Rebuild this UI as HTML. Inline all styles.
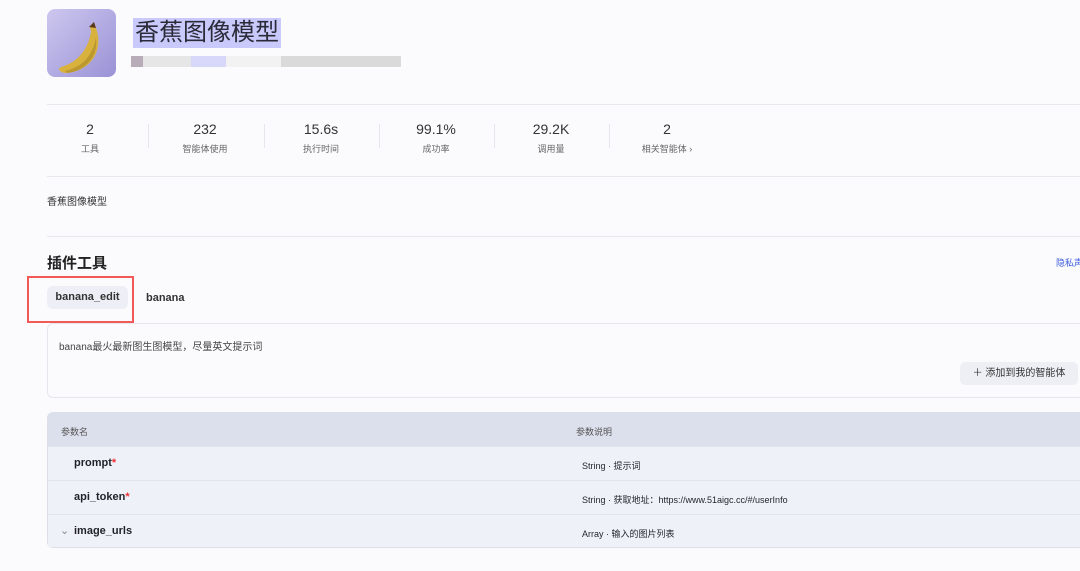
<!DOCTYPE html><html><head><meta charset="utf-8"><style>
*{margin:0;padding:0;box-sizing:border-box}
body{width:1080px;height:571px;background:#fbfbfe;font-family:"Liberation Sans","Noto Sans CJK SC",sans-serif;color:#1f2329;position:relative;overflow:hidden}
.a{position:absolute;white-space:nowrap}
.hr{position:absolute;left:47px;right:0;height:1px;background:#e8e9ef}
.st{position:absolute;top:121px;text-align:center;width:116px}
.st b{display:block;font-weight:normal;font-size:14px;color:#333}
.st span{display:block;font-size:9px;color:#666;margin-top:5px}
.dv{position:absolute;top:124px;width:1px;height:24px;background:#e6e7ec}
.row{position:absolute;left:48px;right:0;height:33px;background:#eff1f8;border-top:1px solid #e2e4ec;font-size:11px}
</style></head><body>
<div class="a" style="left:47px;top:9px;width:69px;height:68px;border-radius:8px;background:linear-gradient(135deg,#cdc7ef,#9a92d6)">
<svg width="69" height="68" viewBox="0 0 69 68"><path d="M14 58 C30 54 42 40 44 22 L43 18 L48 17 L50 22 C56 44 42 62 20 64 C13 64 10 60 14 58Z" fill="#d9b23e"/><path d="M18 62 C36 58 46 46 49 28 C52 48 38 62 20 64Z" fill="#a8872a" opacity=".6"/><path d="M42 18 L47 13 L49 19Z" fill="#5a3a1a"/></svg></div>
<div class="a" style="left:133px;top:18px;height:30px;padding:0 2px;background:#c9c9fb;font-size:24px;line-height:30px;color:#2a2a38">香蕉图像模型</div>
<div class="a" style="left:131px;top:56px;width:270px;height:11px;background:linear-gradient(90deg,#9a8a9a 0 12px,#ddd 12px 60px,#c8c8f8 60px 95px,#eee 95px 150px,#ccc 150px 270px);opacity:.7"></div>
<div class="hr" style="top:104px"></div>
<div class="st" style="left:32px"><b>2</b><span>工具</span></div>
<div class="dv" style="left:148px"></div>
<div class="st" style="left:147px"><b>232</b><span>智能体使用</span></div>
<div class="dv" style="left:264px"></div>
<div class="st" style="left:263px"><b>15.6s</b><span>执行时间</span></div>
<div class="dv" style="left:379px"></div>
<div class="st" style="left:378px"><b>99.1%</b><span>成功率</span></div>
<div class="dv" style="left:494px"></div>
<div class="st" style="left:493px"><b>29.2K</b><span>调用量</span></div>
<div class="dv" style="left:609px"></div>
<div class="st" style="left:609px"><b>2</b><span>相关智能体 ›</span></div>
<div class="hr" style="top:176px"></div>
<div class="a" style="left:47px;top:193px;font-size:10px;color:#333">香蕉图像模型</div>
<div class="hr" style="top:236px"></div>
<div class="a" style="left:47px;top:252px;font-size:15px;font-weight:bold;color:#222">插件工具</div>
<div class="a" style="left:1056px;top:256px;font-size:9px;color:#3b5bdb">隐私声明</div>
<div class="a" style="left:47px;top:286px;width:81px;height:23px;border-radius:6px;background:#eeeff6;font-size:11px;font-weight:bold;line-height:23px;text-align:center;color:#333">banana_edit</div>
<div class="a" style="left:146px;top:292px;font-size:11px;font-weight:bold;color:#333">banana</div>
<div class="a" style="left:27px;top:276px;width:107px;height:47px;border:2px solid #f25a5a"></div>
<div class="a" style="left:47px;top:323px;width:1040px;height:75px;border:1px solid #e6e7ee;border-radius:6px;background:#fbfbfe"></div>
<div class="a" style="left:59px;top:338px;font-size:10px;color:#444">banana最火最新图生图模型，尽量英文提示词</div>
<div class="a" style="left:960px;top:362px;width:118px;height:23px;border-radius:5px;background:#eeeff5;font-size:10px;line-height:23px;text-align:center;color:#333">＋ 添加到我的智能体</div>
<div class="a" style="left:47px;top:412px;width:1040px;height:136px;border:1px solid #dcdfea;border-radius:6px;overflow:hidden;background:#eff1f8">
<div style="height:34px;background:#dcdfec;font-size:9px;color:#555;position:relative"><span class="a" style="left:13px;top:12px">参数名</span><span class="a" style="left:528px;top:12px">参数说明</span></div>
</div>
<div class="row" style="top:446px"><span class="a" style="left:26px;top:10px;font-weight:bold">prompt<i style="color:#e33;font-style:normal">*</i></span><span class="a" style="left:534px;top:12px;font-size:9px">String · 提示词</span></div>
<div class="row" style="top:480px"><span class="a" style="left:26px;top:10px;font-weight:bold">api_token<i style="color:#e33;font-style:normal">*</i></span><span class="a" style="left:534px;top:12px;font-size:9px">String · 获取地址：https://www.51aigc.cc/#/userInfo</span></div>
<div class="row" style="top:514px;height:33px"><span class="a" style="left:12px;top:9px;color:#888">⌄</span><span class="a" style="left:26px;top:10px;font-weight:bold">image_urls</span><span class="a" style="left:534px;top:12px;font-size:9px">Array · 输入的图片列表</span></div>
</body></html>
